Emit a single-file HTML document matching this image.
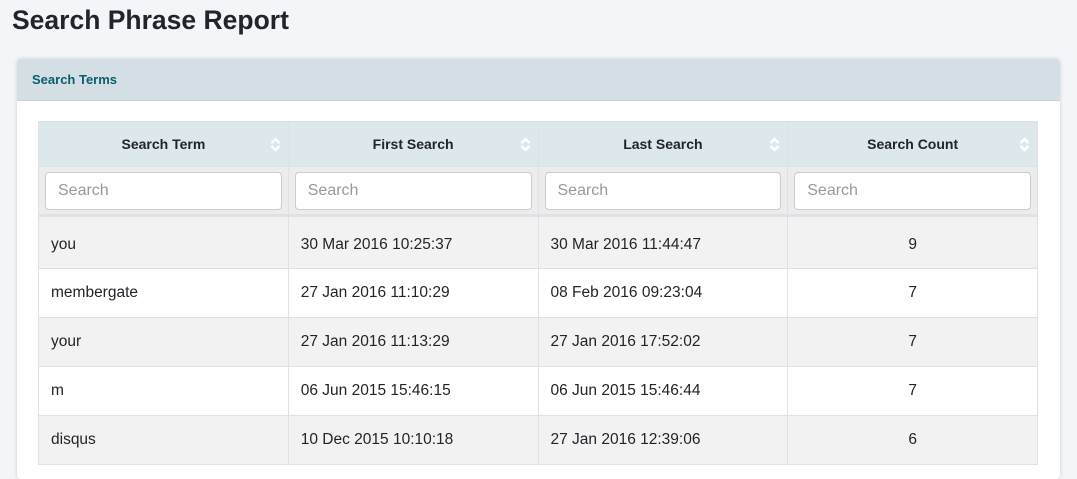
<!DOCTYPE html>
<html><head><style>
body{margin:0;background:#f4f5f8;font-family:"Liberation Sans",sans-serif;width:1077px;height:465px;overflow:hidden;position:relative}
h1{position:absolute;left:12px;top:5px;margin:0;font-size:26.5px;font-weight:bold;color:#212529}
.panel{position:absolute;left:17px;top:59px;width:1043px;height:420px;background:#fff;border-radius:4px;box-shadow:0 0 4px rgba(0,0,0,.15)}
.ph{height:41px;background:#d3dfe5;border-bottom:1px solid #c6d3da;border-radius:4px 4px 0 0;color:#0b5e6b;font-weight:bold;font-size:13px;line-height:41px;padding-left:15px}
table{position:absolute;left:21px;top:62px;width:1000px;border-collapse:collapse;table-layout:fixed}
td,th{border:1px solid #dee2e6;font-size:15.5px;color:#212529;box-sizing:border-box}
th{background:#dde8ec;height:45px;font-size:14px;position:relative;padding:0}
th svg{position:absolute;right:7px;top:15px}
tr.f td{background:#ececec;height:49px;padding:5px 6px 0;vertical-align:top;border-bottom:3px solid #dee2e6}
.in{height:38px;border:1px solid #ccc;border-radius:4px;background:#fff;box-sizing:border-box;color:#999;font-size:16px;line-height:36px;padding-left:12px}
tr.r td{height:49px;padding:0 12px}
tr.r1 td{height:53px;padding-top:4px}
tr.r:nth-child(odd) td{background:#f2f2f2}
td.c{text-align:center}
</style></head><body>
<h1>Search Phrase Report</h1>
<div class="panel"><div class="ph">Search Terms</div>
<table>
<tr><th>Search Term<svg width="11" height="15" viewBox="0 0 11 15"><path d="M1.5 6 L5.5 2 L9.5 6 M1.5 9 L5.5 13 L9.5 9" stroke="#fff" stroke-width="2.4" fill="none"/></svg></th><th>First Search<svg width="11" height="15" viewBox="0 0 11 15"><path d="M1.5 6 L5.5 2 L9.5 6 M1.5 9 L5.5 13 L9.5 9" stroke="#fff" stroke-width="2.4" fill="none"/></svg></th><th>Last Search<svg width="11" height="15" viewBox="0 0 11 15"><path d="M1.5 6 L5.5 2 L9.5 6 M1.5 9 L5.5 13 L9.5 9" stroke="#fff" stroke-width="2.4" fill="none"/></svg></th><th>Search Count<svg width="11" height="15" viewBox="0 0 11 15"><path d="M1.5 6 L5.5 2 L9.5 6 M1.5 9 L5.5 13 L9.5 9" stroke="#fff" stroke-width="2.4" fill="none"/></svg></th></tr>
<tr class="f"><td><div class="in">Search</div></td><td><div class="in">Search</div></td><td><div class="in">Search</div></td><td><div class="in">Search</div></td></tr>
<tr class="r r1"><td>you</td><td>30 Mar 2016 10:25:37</td><td>30 Mar 2016 11:44:47</td><td class="c">9</td></tr>
<tr class="r"><td>membergate</td><td>27 Jan 2016 11:10:29</td><td>08 Feb 2016 09:23:04</td><td class="c">7</td></tr>
<tr class="r"><td>your</td><td>27 Jan 2016 11:13:29</td><td>27 Jan 2016 17:52:02</td><td class="c">7</td></tr>
<tr class="r"><td>m</td><td>06 Jun 2015 15:46:15</td><td>06 Jun 2015 15:46:44</td><td class="c">7</td></tr>
<tr class="r"><td>disqus</td><td>10 Dec 2015 10:10:18</td><td>27 Jan 2016 12:39:06</td><td class="c">6</td></tr>
</table></div>
</body></html>
